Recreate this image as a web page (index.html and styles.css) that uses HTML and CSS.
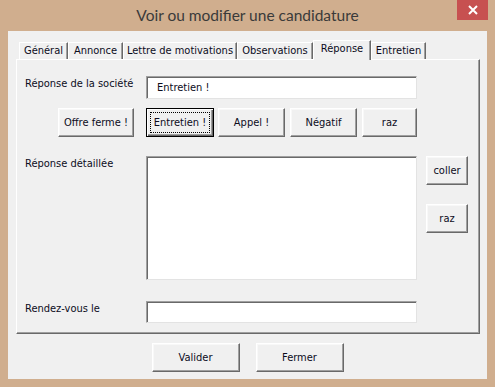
FILE: index.html
```html
<!DOCTYPE html>
<html lang="fr">
<head>
<meta charset="utf-8">
<title>Voir ou modifier une candidature</title>
<link rel="stylesheet" href="styles.css">
</head>
<body>
<div class="window">
  <div class="titlebar">
    <span class="tb-spacer"></span>
    <div class="title">Voir ou modifier une candidature</div>
    <div class="tb-right">
      <button class="close" aria-label="Fermer">
        <svg width="10" height="10" viewBox="0 0 10 10"><path d="M1 1 L9 9 M9 1 L1 9" stroke="#fff" stroke-width="2" fill="none"/></svg>
      </button>
    </div>
  </div>
  <div class="client">
    <div class="tabs">
      <div class="tab t-general">Général</div>
      <div class="tab t-annonce">Annonce</div>
      <div class="tab t-lettre">Lettre de motivations</div>
      <div class="tab t-obs">Observations</div>
      <div class="tab t-rep selected">Réponse</div>
      <div class="tab t-ent">Entretien</div>
    </div>
    <div class="panel">
      <div class="row row-societe">
        <label class="lbl">Réponse de la société</label>
        <div class="field input">Entretien !</div>
      </div>
      <div class="btnrow">
        <button class="btn b-offre">Offre ferme !</button>
        <button class="btn b-ent focused">Entretien !</button>
        <button class="btn b-appel">Appel !</button>
        <button class="btn b-neg">Négatif</button>
        <button class="btn b-raz">raz</button>
      </div>
      <div class="row row-detail">
        <label class="lbl">Réponse détaillée</label>
        <div class="field textarea"></div>
        <div class="side">
          <button class="btn b-side">coller</button>
          <button class="btn b-side">raz</button>
        </div>
      </div>
      <div class="row row-rdv">
        <label class="lbl">Rendez-vous le</label>
        <div class="field input"></div>
      </div>
    </div>
    <div class="footer">
      <button class="btn b-foot">Valider</button>
      <button class="btn b-foot">Fermer</button>
    </div>
  </div>
</div>
</body>
</html>
```
FILE: styles.css
```css
* { box-sizing: border-box; }
html, body { margin: 0; padding: 0; }
body {
  background: #d0ae8e;
  font-family: "DejaVu Sans Condensed", "DejaVu Sans", sans-serif;
  font-stretch: condensed;
  font-size: 11px;
  color: #0c0c1c;
}
.window {
  width: 495px;
  height: 387px;
  background: #d0ae8e;
}
.titlebar {
  height: 31px;
  display: grid;
  grid-template-columns: 1fr auto 1fr;
  align-items: start;
}
.title {
  font-family: "Lato", "Open Sans", sans-serif;
  font-stretch: normal;
  font-size: 15.5px;
  color: #3a3a3a;
  line-height: 30px;
}
.tb-right { display: flex; justify-content: flex-end; padding-right: 7px; }
.close {
  width: 31px;
  height: 20px;
  border: 0;
  padding: 0;
  margin: 0;
  background: #c75050;
  display: flex;
  align-items: center;
  justify-content: center;
}
.client {
  margin: 0 8px;
  height: 348px;
  background: #f0f0f0;
  padding: 9px 7px 0 8px;
}
.tabs {
  height: 19px;
  display: flex;
  align-items: flex-end;
  padding-left: 3px;
}
.tab {
  height: 17px;
  background: #f0f0f0;
  border-top: 1px solid #fff;
  border-left: 1px solid #fff;
  border-right: 1px solid #696969;
  box-shadow: inset -1px 0 #a0a0a0;
  text-align: center;
  line-height: 15px;
  white-space: nowrap;
}
.t-general { width: 49px; }
.t-annonce { width: 55px; }
.t-lettre { width: 114px; }
.t-obs { width: 76px; }
.t-rep { width: 58px; }
.t-ent { width: 55px; }
.tab.selected {
  height: 20px;
  margin-bottom: -1px;
  position: relative;
  z-index: 1;
  line-height: 15px;
}
.panel {
  width: 464px;
  height: 275px;
  border-top: 1px solid #fff;
  border-left: 1px solid #fff;
  border-right: 1px solid #696969;
  border-bottom: 1px solid #696969;
  box-shadow: inset -1px -1px #a0a0a0;
  padding: 16px 0 0 8px;
}
.row {
  display: flex;
  align-items: flex-start;
}
.lbl {
  width: 121px;
  padding-top: 1px;
  line-height: 13px;
}
.field {
  width: 271px;
  background: #fff;
  border-top: 1px solid #a0a0a0;
  border-left: 1px solid #a0a0a0;
  border-right: 1px solid #e3e3e3;
  border-bottom: 1px solid #e3e3e3;
  box-shadow: inset 1px 1px #696969;
}
.input {
  height: 23px;
  padding: 0 10px;
  line-height: 21px;
}
.row-rdv .input { height: 22px; }
.textarea { height: 124px; }
.btnrow {
  display: flex;
  margin-top: 9px;
  margin-left: 33px;
  gap: 5px;
}
.btn {
  font: inherit;
  color: inherit;
  height: 29px;
  padding: 0;
  margin: 0;
  background: #f0f0f0;
  border: 1px solid;
  border-color: #fff #696969 #696969 #fff;
  box-shadow: inset -1px -1px #a0a0a0, inset 1px 1px #f8f8f8;
  border-radius: 0;
}
.b-offre { width: 76px; margin-right: 7px; }
.b-ent { width: 68px; }
.b-appel { width: 67px; margin-left: -1px; }
.b-neg { width: 67px; }
.b-raz { width: 55px; }
.btn.focused {
  border-color: #000;
  box-shadow: inset 1px 1px #fff, inset -1px -1px #696969, inset -2px -2px #a0a0a0;
  outline: 1px dotted #000;
  outline-offset: -5px;
}
.row-detail { margin-top: 19px; }
.side {
  margin-left: 9px;
  display: flex;
  flex-direction: column;
  gap: 19px;
}
.b-side { width: 42px; }
.row-rdv { margin-top: 21px; }
.footer {
  display: flex;
  justify-content: center;
  gap: 16px;
  margin-top: 9px;
  padding-right: 1px;
}
.b-foot { width: 88px; }
```
